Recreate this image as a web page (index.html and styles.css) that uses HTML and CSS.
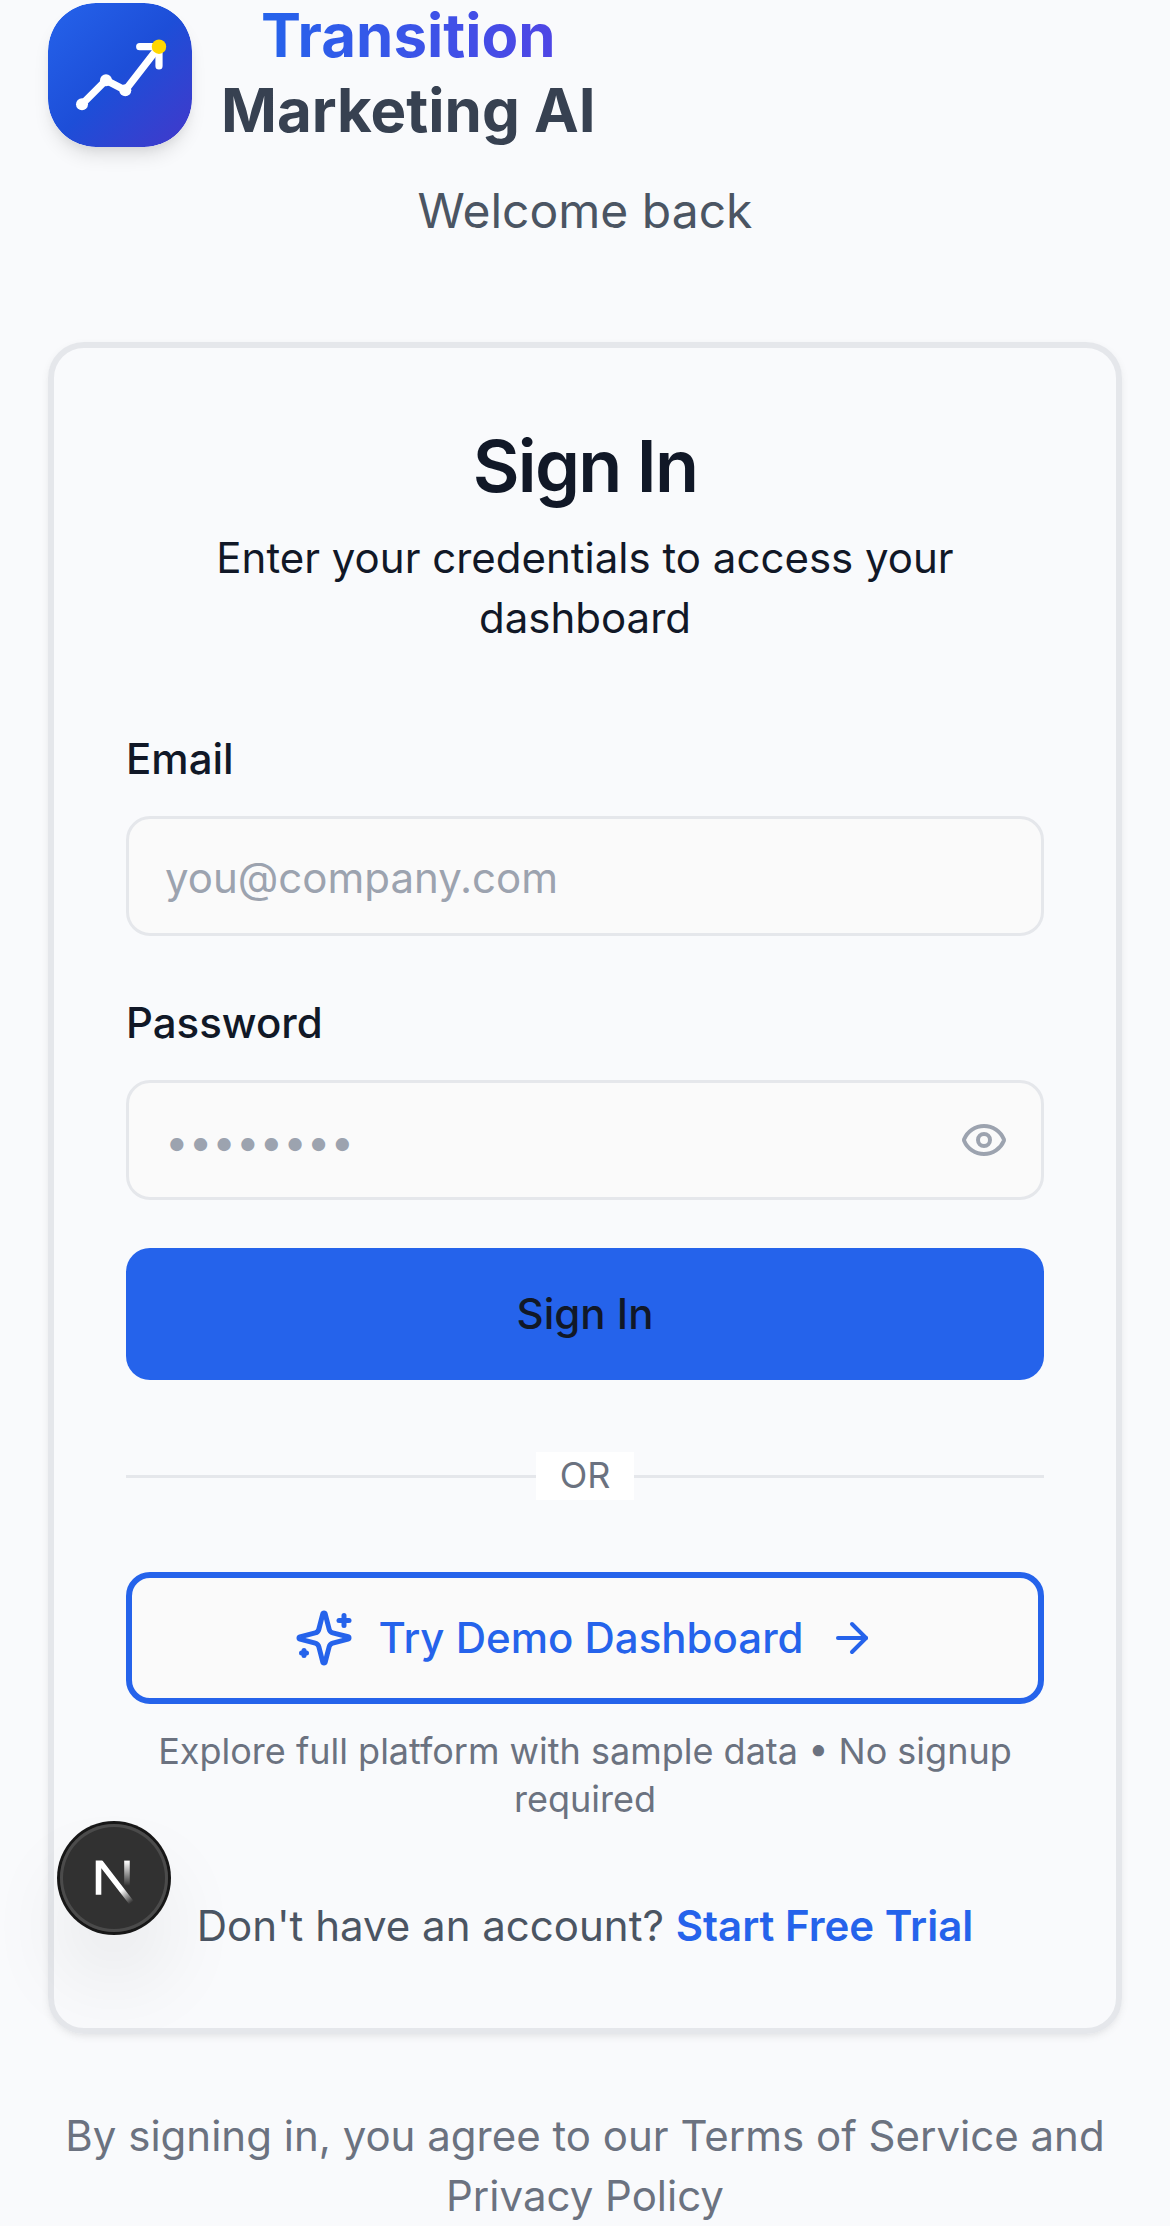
FILE: index.html
```html
<!DOCTYPE html>
<html lang="en">
<head>
<meta charset="utf-8">
<title>Sign In - Transition Marketing AI</title>
<link rel="stylesheet" href="styles.css">
</head>
<body>
<main class="page">
  <header class="brand">
    <svg class="brand-logo" viewBox="0 0 144 144" fill="none">
      <defs>
        <linearGradient id="logo-bg" x1="0" y1="0" x2="1" y2="1">
          <stop offset="0" stop-color="#2563eb"/>
          <stop offset=".5" stop-color="#1d4ed8"/>
          <stop offset="1" stop-color="#4338ca"/>
        </linearGradient>
      </defs>
      <rect width="144" height="144" rx="48" fill="url(#logo-bg)"/>
      <g stroke="#fff" stroke-width="7.2" stroke-linecap="round" stroke-linejoin="round">
        <path d="M34 101.3 58 77.3 77.3 87.3 111 43.7"/>
        <path d="M91.7 43.7H111V63"/>
      </g>
      <g fill="#fff">
        <circle cx="34" cy="101.3" r="6"/>
        <circle cx="58" cy="77.3" r="6"/>
        <circle cx="77.3" cy="87.2" r="6"/>
      </g>
      <circle cx="111" cy="43.7" r="7.2" fill="#ffd700"/>
    </svg>
    <h1 class="brand-name"><span class="brand-accent">Transition</span><span>Marketing AI</span></h1>
  </header>
  <p class="welcome">Welcome back</p>

  <section class="card">
    <h2 class="card-title">Sign In</h2>
    <p class="card-subtitle">Enter your credentials to access your dashboard</p>

    <form class="form">
      <div class="field">
        <div class="label-row"><label class="label" for="email">Email</label></div>
        <input class="input" id="email" type="email" placeholder="you@company.com">
      </div>
      <div class="field">
        <div class="label-row"><label class="label" for="password">Password</label></div>
        <div class="input-wrap">
          <input class="input" id="password" type="password" placeholder="••••••••">
          <svg class="eye" viewBox="0 0 24 24"><path d="M2.062 12.348a1 1 0 0 1 0-.696 10.75 10.75 0 0 1 19.876 0 1 1 0 0 1 0 .696 10.75 10.75 0 0 1-19.876 0"/><circle cx="12" cy="12" r="3"/></svg>
        </div>
      </div>
      <button class="button button-primary" type="button">Sign In</button>
    </form>

    <div class="divider"><span class="divider-text">OR</span></div>

    <button class="button button-outline" type="button">
      <svg class="icon-sparkles" viewBox="0 0 24 24"><path d="M9.937 15.5A2 2 0 0 0 8.5 14.063l-6.135-1.582a.5.5 0 0 1 0-.962L8.5 9.936A2 2 0 0 0 9.937 8.5l1.582-6.135a.5.5 0 0 1 .963 0L14.063 8.5A2 2 0 0 0 15.5 9.937l6.135 1.581a.5.5 0 0 1 0 .964L15.5 14.063a2 2 0 0 0-1.437 1.437l-1.582 6.135a.5.5 0 0 1-.963 0z"/><path d="M20 3v4"/><path d="M22 5h-4"/><path d="M4 17v2"/><path d="M5 18H3"/></svg>
      <span>Try Demo Dashboard</span>
      <svg class="icon-arrow" viewBox="0 0 24 24"><path d="M5 12h14"/><path d="m12 5 7 7-7 7"/></svg>
    </button>
    <p class="hint">Explore full platform with sample data • No signup required</p>

    <p class="signup">Don't have an account? <a class="signup-link" href="#">Start Free Trial</a></p>
  </section>

  <p class="legal">By signing in, you agree to our Terms of Service and Privacy Policy</p>
</main>

<div class="dev-badge">
  <svg class="dev-mark" viewBox="0 0 40 40" fill="none">
    <defs>
      <linearGradient id="mark-diagonal" x1="9.95555" y1="11.1226" x2="15.4778" y2="17.9671" gradientUnits="userSpaceOnUse">
        <stop stop-color="#fff"/><stop offset=".604072" stop-color="#fff" stop-opacity="0"/><stop offset="1" stop-color="#fff" stop-opacity="0"/>
      </linearGradient>
      <linearGradient id="mark-stem" x1="11.8222" y1="1.40039" x2="11.791" y2="9.62542" gradientUnits="userSpaceOnUse">
        <stop stop-color="#fff"/><stop offset="1" stop-color="#fff" stop-opacity="0"/>
      </linearGradient>
      <clipPath id="mark-clip"><rect x="0" y="1.2" width="20" height="20"/></clipPath>
    </defs>
    <g transform="translate(8.5 13)" stroke-width="1.86">
      <g clip-path="url(#mark-clip)"><path d="M13.3 15.2 2.34 1V12.6" stroke="url(#mark-diagonal)"/></g>
      <path d="M11.825 1.2V13.1" stroke="url(#mark-stem)"/>
    </g>
  </svg>
</div>
</body>
</html>
```
FILE: styles.css
```css
* {
  box-sizing: border-box;
  margin: 0;
}

body {
  background: #f9fafc;
  color: #111827;
  font-family: Inter, "Liberation Sans", sans-serif;
  font-size: 48px;
  line-height: 72px;
}

.page {
  padding: 0 48px;
}

/* Brand header */
.brand {
  display: flex;
  align-items: center;
  gap: 29px;
}

.brand-logo {
  width: 144px;
  height: 144px;
  border-radius: 48px;
  box-shadow: 0 12px 18px -3px rgba(0, 0, 0, 0.1), 0 6px 12px -6px rgba(0, 0, 0, 0.1);
}

.brand-name {
  display: flex;
  flex-direction: column;
  align-items: center;
  margin: -2px 0 2px;
  font-size: 60px;
  font-weight: 700;
  line-height: 75px;
  color: #374151;
}

.brand-accent {
  background: linear-gradient(90deg, #2563eb, #4f46e5);
  background-clip: text;
  color: transparent;
}

.welcome {
  margin: 25px 0 95px;
  text-align: center;
  color: #4b5563;
}

/* Sign-in card */
.card {
  padding: 73px 72px 72px;
  border: 6px solid #e5e7eb;
  border-radius: 36px;
  box-shadow: 0 3px 9px rgba(0, 0, 0, 0.06), 0 3px 6px -3px rgba(0, 0, 0, 0.06);
  text-align: center;
}

.card-title {
  font-size: 72px;
  font-weight: 600;
  line-height: 90px;
  letter-spacing: -0.025em;
}

.card-subtitle {
  margin-top: 17px;
  font-size: 42px;
  line-height: 60px;
}

.form {
  display: flex;
  flex-direction: column;
  gap: 48px;
  margin-top: 72px;
}

.field {
  text-align: left;
}

.label-row {
  padding-top: 1px;
  margin-bottom: 23px;
}

.label {
  font-size: 42px;
  font-weight: 500;
  line-height: 42px;
}

.input {
  display: block;
  width: 100%;
  height: 120px;
  padding: 2px 36px 0;
  border: 3px solid #e5e7eb;
  border-radius: 24px;
  background: #fafafa;
  font: 42px/60px Inter, "Liberation Sans", sans-serif;
}

.input::placeholder {
  color: #9ca3af;
  opacity: 1;
}

.input-wrap {
  position: relative;
}

.eye {
  position: absolute;
  top: 36px;
  right: 36px;
  width: 48px;
  height: 48px;
  color: #9ca3af;
}

.eye,
.icon-sparkles,
.icon-arrow {
  fill: none;
  stroke: currentColor;
  stroke-width: 2;
  stroke-linecap: round;
  stroke-linejoin: round;
}

.button {
  display: flex;
  align-items: center;
  justify-content: center;
  gap: 24px;
  width: 100%;
  height: 132px;
  border: 0;
  border-radius: 24px;
  font: 500 42px/60px Inter, "Liberation Sans", sans-serif;
}

.button-primary {
  background: #2563eb;
  color: #111827;
}

.button-outline {
  border: 6px solid #2563eb;
  background: #fafafa;
  color: #2563eb;
}

.icon-sparkles {
  width: 60px;
  height: 60px;
}

.icon-arrow {
  width: 48px;
  height: 48px;
}

.divider {
  display: flex;
  align-items: center;
  margin: 72px 0;
}

.divider::before,
.divider::after {
  content: "";
  flex: 1;
  height: 3px;
  background: #e5e7eb;
}

.divider-text {
  padding: 0 24px 2px;
  background: #fff;
  color: #6b7280;
  font-size: 36px;
  line-height: 46px;
}

.hint {
  margin-top: 23px;
  color: #6b7280;
  font-size: 36px;
  line-height: 48px;
}

.signup {
  margin-top: 73px;
  color: #4b5563;
  font-size: 42px;
  line-height: 60px;
}

.signup-link {
  color: #2563eb;
  font-weight: 600;
  text-decoration: none;
}

.legal {
  margin-top: 72px;
  color: #6b7280;
  font-size: 42px;
  line-height: 60px;
  text-align: center;
}

/* Floating dev-tools badge, over the page */
.dev-badge {
  position: absolute;
  left: 60px;
  top: 1824px;
  width: 108px;
  height: 108px;
  border-radius: 50%;
  background: #313131;
  box-shadow: 0 0 0 3px #171717, inset 0 0 0 3px #4b4b4b, 0 48px 96px -24px rgba(0, 0, 0, 0.24);
}

.dev-mark {
  display: block;
  width: 120px;
  height: 120px;
  margin: -6px 0 0 6px;
}
```
